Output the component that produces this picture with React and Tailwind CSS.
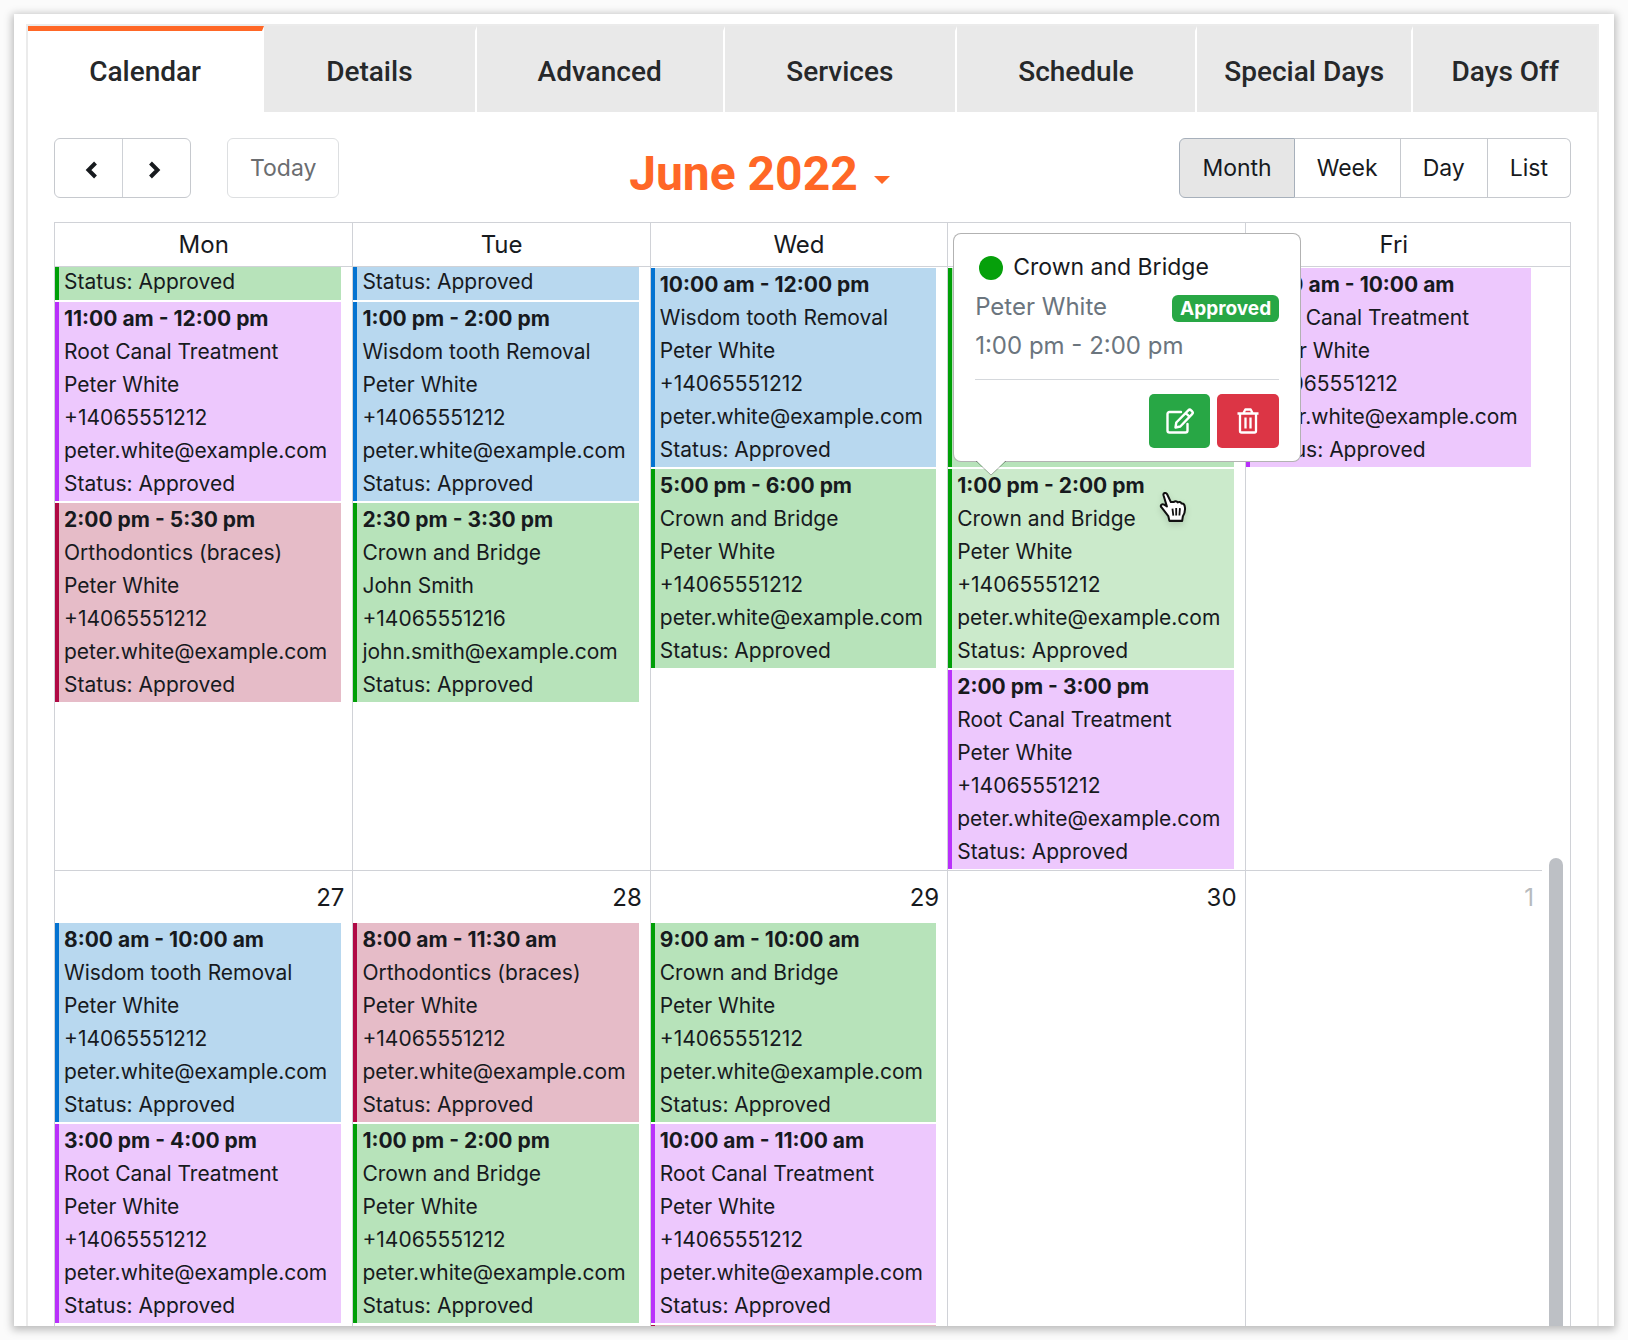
const S = {
  green: "border-[#009f07] bg-[#b7e3ba]",
  greenLight: "border-[#009f07] bg-[#cbeacb]",
  blue: "border-[#0473d1] bg-[#b8d8ef]",
  purple: "border-[#b930fb] bg-[#edc8fd]",
  red: "border-[#b00a45] bg-[#e6bcc8]",
};

const peter = ["Peter White", "+14065551212", "peter.white@example.com"];
const john = ["John Smith", "+14065551216", "john.smith@example.com"];
const wisdom = "Wisdom tooth Removal";
const canal = "Root Canal Treatment";
const braces = "Orthodontics (braces)";
const crown = "Crown and Bridge";

const weeks = [
  [
    { clipped: true, events: [{ c: S.green, tail: true }, { c: S.purple, t: "11:00 am - 12:00 pm", s: canal, p: peter }, { c: S.red, t: "2:00 pm - 5:30 pm", s: braces, p: peter }] },
    { clipped: true, events: [{ c: S.blue, tail: true }, { c: S.blue, t: "1:00 pm - 2:00 pm", s: wisdom, p: peter }, { c: S.green, t: "2:30 pm - 3:30 pm", s: crown, p: john }] },
    { events: [{ c: S.blue, t: "10:00 am - 12:00 pm", s: wisdom, p: peter }, { c: S.green, t: "5:00 pm - 6:00 pm", s: crown, p: peter }] },
    { events: [{ c: S.green, t: "9:00 am - 10:00 am", s: crown, p: peter }, { c: S.greenLight, t: "1:00 pm - 2:00 pm", s: crown, p: peter, open: true }, { c: S.purple, t: "2:00 pm - 3:00 pm", s: canal, p: peter }] },
    { events: [{ c: S.purple, t: "9:00 am - 10:00 am", s: canal, p: peter }] },
  ],
  [
    { day: 27, events: [{ c: S.blue, t: "8:00 am - 10:00 am", s: wisdom, p: peter }, { c: S.purple, t: "3:00 pm - 4:00 pm", s: canal, p: peter }] },
    { day: 28, events: [{ c: S.red, t: "8:00 am - 11:30 am", s: braces, p: peter }, { c: S.green, t: "1:00 pm - 2:00 pm", s: crown, p: peter }] },
    { day: 29, events: [{ c: S.green, t: "9:00 am - 10:00 am", s: crown, p: peter }, { c: S.purple, t: "10:00 am - 11:00 am", s: canal, p: peter }, { c: S.red, blank: true }] },
    { day: 30, events: [] },
    { day: 1, muted: true, events: [] },
  ],
];

const tabs = [
  ["Calendar", "grow-[236]"],
  ["Details", "grow-[212]"],
  ["Advanced", "grow-[248]"],
  ["Services", "grow-[232]"],
  ["Schedule", "grow-[240]"],
  ["Special Days", "grow-[216]"],
  ["Days Off", "grow-[185]"],
];

function Tabs() {
  return (
    <div role="tablist" className="flex">
      {tabs.map(([name, grow], i) => (
        <button
          key={name}
          type="button"
          role="tab"
          aria-selected={i === 0}
          className={`h-[86px] basis-0 border-t-[5px] font-[Roboto] text-[28px] font-medium text-[#26282a] ${grow} ${
            i === 0 ? "border-t-[#ff6726] bg-white" : "border-t-[#e9e9e9] bg-[#e9e9e9]"
          } ${i < 6 ? "border-r-2 border-r-white" : ""}`}
        >
          {name}
        </button>
      ))}
    </div>
  );
}

function Chevron({ d }) {
  return (
    <svg viewBox="0 0 12 18" className="h-[18px] w-3" fill="none" stroke="currentColor" strokeWidth="4" aria-hidden="true">
      <path d={d} />
    </svg>
  );
}

function Toolbar() {
  return (
    <div className="flex items-start justify-between px-[26px] pt-[26px]">
      <div className="flex gap-9">
        <div className="flex h-15 divide-x divide-[#ced1d6] rounded-[6px] border border-[#c6c9ce]">
          <button type="button" aria-label="Previous month" className="flex w-[68px] items-center justify-center pt-1 pl-1">
            <Chevron d="M10.5 2 3.5 9l7 7" />
          </button>
          <button type="button" aria-label="Next month" className="flex w-[67px] items-center justify-center pt-1 pr-1">
            <Chevron d="M1.500 2 8.500 9l-7 7" />
          </button>
        </div>
        <button type="button" className="h-15 rounded-[6px] border border-[#dddfe1] px-[22px] pt-px text-[23px] text-[#6b6d70]">
          Today
        </button>
      </div>
      <button type="button" className="flex items-center gap-4 pt-2 font-[Roboto] text-5xl leading-[56px] font-bold text-[#ff6726]">
        June 2022
        <svg viewBox="0 0 16 8" className="mt-3 h-2 w-4" fill="currentColor" aria-hidden="true">
          <path d="M0 0h16L8 8z" />
        </svg>
      </button>
      <div className="flex h-15 text-[23px]">
        <button type="button" aria-pressed="true" className="rounded-l-[6px] border border-[#a7b0bb] bg-[#e6e6e6] px-[22px] pt-px">
          Month
        </button>
        <button type="button" className="border-y border-r border-[#c6c9ce] px-[22px] pt-px">Week</button>
        <button type="button" className="border-y border-r border-[#c6c9ce] px-[22px] pt-px">Day</button>
        <button type="button" className="rounded-r-[6px] border-y border-r border-[#c6c9ce] px-[22px] pt-px">List</button>
      </div>
    </div>
  );
}

function Hand() {
  return (
    <svg viewBox="0 0 26 30" className="absolute top-[22px] left-[207px] h-[32px] w-[28px] drop-shadow-md" aria-hidden="true">
      <path
        d="M7.500 3c-1-2-4-1.300-3.400 1l3.200 10.500-2.600-1.700c-2-1.200-4 .8-2.600 2.400l6.500 8.300 1 4.500h12l.6-4c1.800-3 2.400-5.200 2-8.500-.3-3-1.500-4-3.200-3.700-.8-1.500-2.300-1.900-3.600-1.100-.9-1.300-2.500-1.400-3.600-.5L11 10.400z"
        fill="#fff"
        stroke="#111"
        strokeWidth="1.900"
        strokeLinejoin="round"
      />
      <path d="M12.500 16.500l.8 6.500M16 16v7M19.500 16l-.5 7" stroke="#111" strokeWidth="1.700" />
    </svg>
  );
}

function Popover() {
  return (
    <div role="dialog" aria-label="Appointment" className="absolute bottom-[calc(100%+7px)] left-px z-10 w-[348px] rounded-lg border border-black/30 bg-white px-[21px] pt-[14px] pb-[13px] text-2xl leading-[39px]">
      <div className="flex items-center gap-[10px] pl-1 text-[23px]">
        <span className="size-6 rounded-full bg-[#06a00b]" />
        <span>Crown and Bridge</span>
      </div>
      <div className="flex items-center justify-between text-[#6b757e]">
        <span>Peter White</span>
        <span className="mt-1 rounded-[6px] bg-[#28a745] px-2 text-[19px] leading-[27px] font-bold text-white">Approved</span>
      </div>
      <div className="text-[#6b757e]">1:00 pm - 2:00 pm</div>
      <hr className="mt-[14px] border-[#d5d8dc]" />
      <div className="mt-[14px] flex justify-end gap-[7px] text-white">
        <button type="button" aria-label="Edit appointment" className="flex h-[54px] w-[61px] items-center justify-center rounded-[5px] bg-[#28a745]">
          <svg viewBox="0 0 28 26" className="h-[26px] w-7" fill="none" stroke="currentColor" strokeWidth="2.400" strokeLinejoin="round" strokeLinecap="round" aria-hidden="true">
            <path d="M15 4H3.500A2 2 0 0 0 1.500 6v16.500a2 2 0 0 0 2 2h16a2 2 0 0 0 2-2V16" />
            <path d="M9.500 19.500l.8-5L22.300 2.300a2 2 0 0 1 2.800 0l1 1a2 2 0 0 1 0 2.800L14.300 18.500zM19.700 5l3.700 3.700" />
          </svg>
        </button>
        <button type="button" aria-label="Delete appointment" className="flex h-[54px] w-[62px] items-center justify-center rounded-[5px] bg-[#dc3545]">
          <svg viewBox="0 0 22 26" className="h-[26px] w-[22px]" fill="none" stroke="currentColor" strokeWidth="2.300" strokeLinejoin="round" aria-hidden="true">
            <path d="M.5 5.500h21M6.500 5l1.800-3.500h5.400L15.500 5M3 5.500V23a1.500 1.500 0 0 0 1.500 1.500h13A1.500 1.500 0 0 0 19 23V5.500M8.500 9.500v11M13.500 9.500v11" />
          </svg>
        </button>
      </div>
      <svg viewBox="0 0 30 15" className="absolute top-full left-[22px] h-[15px] w-[30px]" aria-hidden="true">
        <path d="M0-1h30L15 14z" fill="#fff" />
        <path d="M0 0l15 14L30 0" fill="none" stroke="#000" strokeOpacity=".3" />
      </svg>
    </div>
  );
}

function Event({ e }) {
  if (e.blank) {
    return <div className={`h-[33px] border-l-4 ${e.c}`} />;
  }
  if (e.tail) {
    return (
      <div className={`flex h-[33px] flex-col justify-end overflow-hidden border-l-4 pb-[2px] pl-[5px] ${e.c}`}>
        Status: Approved
      </div>
    );
  }
  return (
    <div className={`relative border-l-4 pb-px pl-[5px] ${e.c}`}>
      <div className="font-bold">{e.t}</div>
      <div>{e.s}</div>
      {e.p.map((x) => (
        <div key={x}>{x}</div>
      ))}
      <div>Status: Approved</div>
      {e.open && <Popover />}
      {e.open && <Hand />}
    </div>
  );
}

function Calendar() {
  return (
    <div className="px-[26px] pt-5">
      <table className="w-full table-fixed border-separate border-spacing-0 border border-[#d0d2d7]">
        <colgroup>
          <col /><col /><col /><col /><col />
          <col className="w-7" />
        </colgroup>
        <thead>
          <tr className="h-11 text-2xl leading-[43px]">
            {["Mon", "Tue", "Wed", "Thu", "Fri"].map((d) => (
              <th key={d} scope="col" className="border-b border-l border-[#d0d2d7] p-0 font-normal first:border-l-0">{d}</th>
            ))}
            <td className="border-b border-[#d0d2d7] p-0" />
          </tr>
        </thead>
        <tbody>
          {weeks.map((week, w) => (
            <tr key={w} className={w === 0 ? "h-[604px]" : "h-[700px]"}>
              {week.map((cell, i) => (
                <td key={i} className={`border-l border-[#d0d2d7] p-0 align-top first:border-l-0 ${w === 0 ? "border-b" : ""}`}>
                  {cell.day && (
                    <div className={`h-[52px] pr-2 text-right text-2xl leading-[54px] ${cell.muted ? "text-[#b7babd]" : ""}`}>{cell.day}</div>
                  )}
                  <div className={`mr-[11px] flex flex-col gap-[2px] text-[21px] leading-[33px] ${w === 0 && !cell.clipped ? "pt-px" : ""}`}>
                    {cell.events.map((e, k) => (
                      <Event key={k} e={e} />
                    ))}
                  </div>
                </td>
              ))}
              {w === 0 && (
                <td rowSpan={2} className="p-0 align-top">
                  <div className="mt-[591px] ml-[7px] h-[700px] w-[14px] rounded-full bg-[#bdc0c5]" />
                </td>
              )}
            </tr>
          ))}
        </tbody>
      </table>
    </div>
  );
}

export default function App() {
  return (
    <div className="flex h-screen overflow-hidden bg-[#fbfbfb] p-[14px] font-[Inter,sans-serif] text-[#171a1e]">
      <main className="min-w-0 flex-1 bg-white pt-[10px] pr-[15px] pl-3 shadow-[0_2px_8px_2px_rgba(0,0,0,0.25)]">
        <div className="h-full overflow-hidden border-x-2 border-t-2 border-[#ebebeb] bg-white">
          <Tabs />
          <Toolbar />
          <Calendar />
        </div>
      </main>
    </div>
  );
}
